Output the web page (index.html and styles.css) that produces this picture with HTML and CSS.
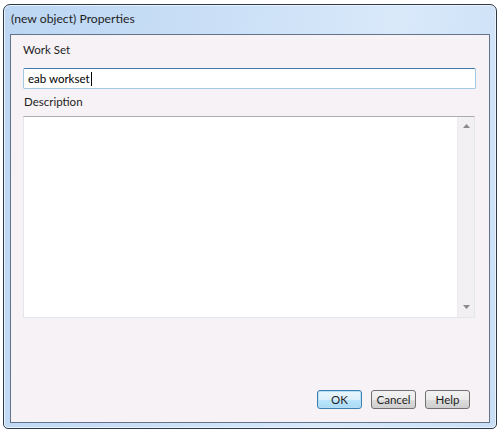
FILE: index.html
```html
<!DOCTYPE html>
<html>
<head>
<meta charset="utf-8">
<link rel="stylesheet" href="styles.css">
</head>
<body>
<div class="window">
  <div class="titlebar"><span class="title">(new object) Properties</span></div>
  <div class="client">
    <div class="label label-first">Work Set</div>
    <div class="input"><span class="input-text">eab workset</span><span class="caret"></span></div>
    <div class="label label-desc">Description</div>
    <div class="textarea">
      <div class="ta-body"></div>
      <div class="scrollbar">
        <svg class="arrow" width="7" height="4" viewBox="0 0 7 4"><path d="M3.5 0 L7 4 L0 4 Z" fill="#8a8a8a"/></svg>
        <svg class="arrow" width="7" height="4" viewBox="0 0 7 4"><path d="M0 0 L7 0 L3.5 4 Z" fill="#8a8a8a"/></svg>
      </div>
    </div>
    <div class="buttons">
      <button class="btn btn-default">OK</button>
      <button class="btn">Cancel</button>
      <button class="btn">Help</button>
    </div>
  </div>
</div>
</body>
</html>
```
FILE: styles.css
```css
html, body {
  margin: 0;
  padding: 0;
  background: #ffffff;
}
body {
  font-family: Lato, "Noto Sans", sans-serif;
  font-size: 11.5px;
  color: #000;
}
.window {
  margin: 4px 0 0 3px;
  width: 494px;
  height: 425px;
  box-sizing: border-box;
  border: 1px solid #2e3a48;
  border-radius: 7px 7px 5px 5px;
  background: linear-gradient(100deg, #bcd6f3 0%, #cde1f7 45%, #d9e9fa 70%, #c9def6 100%);
  padding: 0 6px 5px 6px;
  display: flex;
  flex-direction: column;
  box-shadow: inset 0 0 0 1px #eaf3fd;
}
.titlebar {
  height: 29px;
  flex: none;
  display: flex;
  align-items: center;
  padding-left: 1px;
}
.title {
  color: #1e1e1e;
  font-size: 12.2px;
  position: relative;
  top: -1px;
}
.client {
  flex: 1;
  background: #f6f2f6;
  border: 1px solid #62738a;
  display: flex;
  flex-direction: column;
  padding: 0 13px 0 12px;
}
.label {
  color: #1e1e1e;
  line-height: 16px;
}
.label-first {
  margin-top: 7px;
}
.label-desc {
  margin-top: 5px;
  padding-left: 1px;
}
.input {
  margin-top: 10px;
  height: 21px;
  box-sizing: border-box;
  background: #fff;
  border: 1px solid #a4c9e6;
  border-top-color: #3d7bad;
  border-radius: 2px;
  display: flex;
  align-items: center;
  padding-left: 4px;
}
.input-text {
  line-height: 16px;
}
.caret {
  display: inline-block;
  width: 1px;
  height: 14px;
  background: #000;
  margin-left: 1px;
}
.textarea {
  margin-top: 6px;
  height: 202px;
  box-sizing: border-box;
  background: #fff;
  border: 1px solid #e3e6ec;
  border-top-color: #abadb3;
  display: flex;
  margin-right: 1px;
}
.ta-body {
  flex: 1;
}
.scrollbar {
  width: 17px;
  flex: none;
  background: #f3f0f3;
  border-left: 1px solid #ecebee;
  display: flex;
  flex-direction: column;
  justify-content: space-between;
  align-items: center;
  padding: 7px 0 8px;
  box-sizing: border-box;
}
.buttons {
  margin-top: auto;
  margin-bottom: 13px;
  display: flex;
  justify-content: flex-end;
  gap: 9px;
  padding-right: 6px;
}
.btn {
  font-family: inherit;
  font-size: 11.5px;
  width: 45px;
  height: 19px;
  padding: 0;
  box-sizing: border-box;
  border: 1px solid #707070;
  border-radius: 3px;
  background: linear-gradient(#f2f2f2 0%, #ebebeb 50%, #dddddd 51%, #cfcfcf 100%);
  color: #1e1e1e;
  line-height: 16px;
}
.btn-default {
  border-color: #3c7fb1;
  background: linear-gradient(#eaf6fd 0%, #d9f0fc 50%, #bee6fd 51%, #a7d9f5 100%);
  box-shadow: inset 0 0 0 1px #b8ddf4;
}
```
